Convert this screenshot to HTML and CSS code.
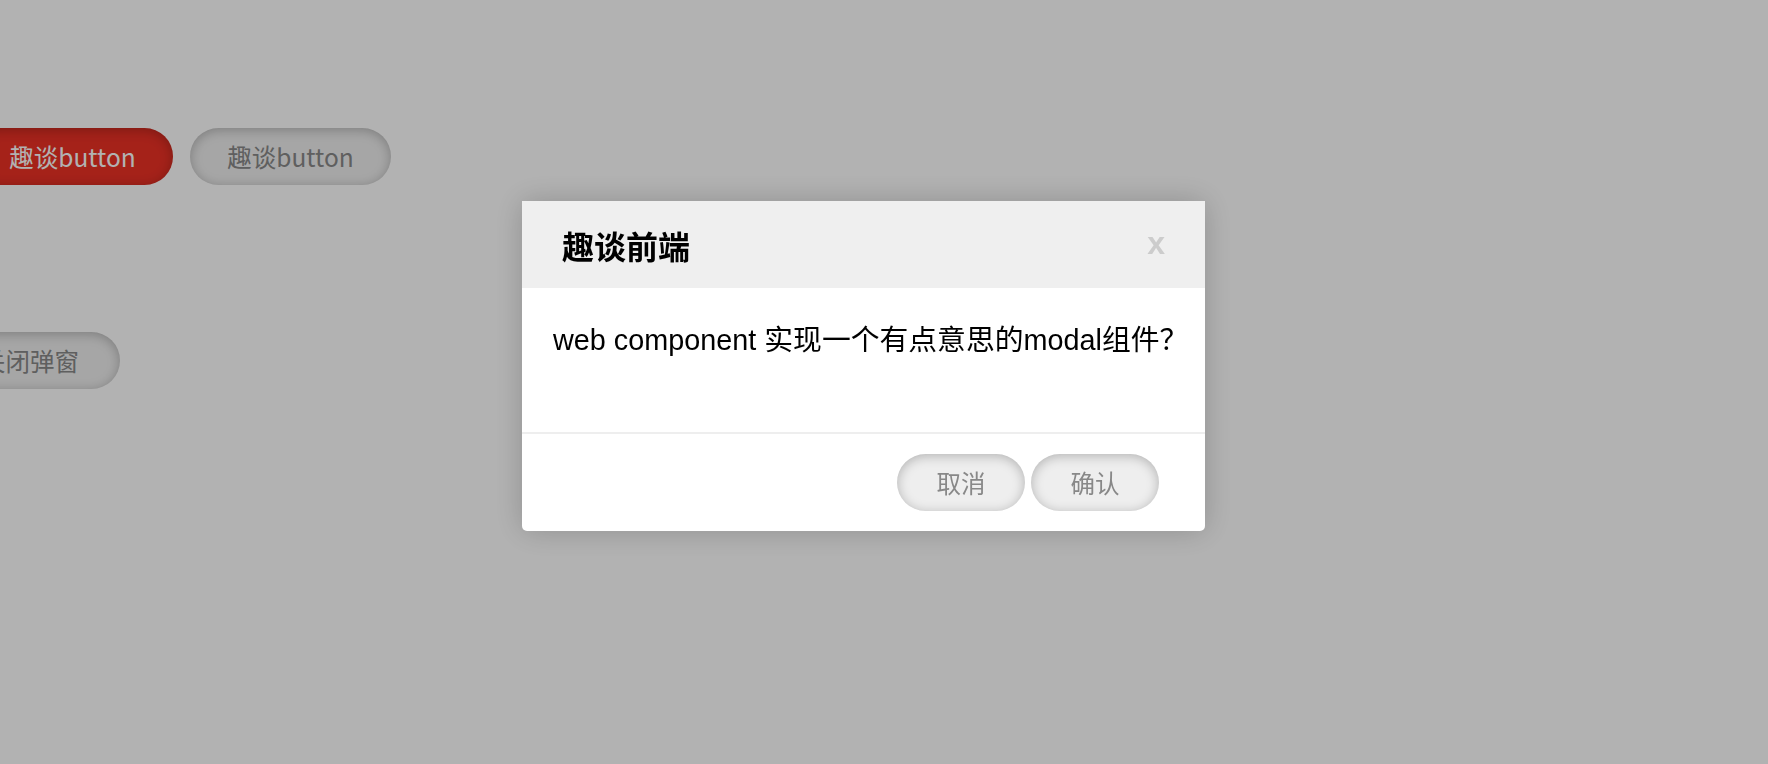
FILE: index.html
```html
<!DOCTYPE html>
<html lang="zh-CN">
<head>
    <meta charset="UTF-8">
    <meta name="viewport" content="width=device-width, initial-scale=1.0">
    <title>趣谈前端 modal</title>
    <link rel="stylesheet" href="styles.css">
</head>
<body>
    <div class="page">
        <div class="btn-row first-row">
            <button class="qt-btn qt-btn-red">趣谈button</button>
            <button class="qt-btn">趣谈button</button>
        </div>
        <div class="btn-row second-row">
            <button class="qt-btn qt-btn-close">关闭弹窗</button>
        </div>
    </div>

    <div class="mask">
        <div class="modal">
            <div class="modal-header">
                <span class="modal-title">趣谈前端</span>
                <span class="modal-close">x</span>
            </div>
            <div class="modal-body">web component 实现一个有点意思的modal组件？</div>
            <div class="modal-footer">
                <button class="qt-btn qt-btn-small">取消</button>
                <button class="qt-btn qt-btn-small">确认</button>
            </div>
        </div>
    </div>
</body>
</html>
```

FILE: styles.css
```css
body {
    margin: 0;
    background-color: #fff;
    font-family: "Liberation Sans", "Noto Sans CJK SC", sans-serif;
    overflow: hidden;
}
.page {
    padding-top: 128px;
}
.btn-row {
    display: flex;
    gap: 17px;
}
.first-row {
    margin-left: -28px;
}
.second-row {
    margin-left: -60px;
    margin-top: 147px;
}
.qt-btn {
    width: 201px;
    height: 57px;
    line-height: 57px;
    padding: 0;
    border: none;
    border-radius: 29px;
    background-color: #eeeeee;
    box-shadow: inset 0 2px 12px rgba(0,0,0,0.25);
    color: #888;
    font-family: "Noto Sans CJK SC", sans-serif;
    font-size: 24.5px;
    text-align: center;
    cursor: pointer;
}
.qt-btn-red {
    background-color: #ec3125;
    color: #fff;
}
.qt-btn-close {
    width: 180px;
}
.qt-btn-small {
    width: 128px;
}
.mask {
    position: fixed;
    top: 0;
    left: 0;
    right: 0;
    bottom: 0;
    background-color: rgba(0,0,0,0.3);
    padding: 201px 0 0 522px;
}
.modal {
    width: 683px;
    background-color: #fff;
    border-radius: 0 0 5px 5px;
    box-shadow: 0 0 30px rgba(0,0,0,0.2);
    overflow: hidden;
}
.modal-header {
    height: 87px;
    display: flex;
    align-items: center;
    justify-content: space-between;
    padding: 0 40px;
    background-color: #efefef;
}
.modal-title {
    font-family: "Noto Sans CJK SC", sans-serif;
    font-size: 32px;
    font-weight: bold;
    color: #000;
}
.modal-close {
    font-size: 32px;
    font-weight: bold;
    color: #cccccc;
    cursor: pointer;
    margin-top: -2px;
}
.modal-body {
    min-height: 84px;
    padding: 30px 20px 30px 31px;
    font-size: 28.8px;
    line-height: 44px;
    color: #000;
    white-space: nowrap;
}
.modal-footer {
    display: flex;
    justify-content: flex-end;
    gap: 6px;
    padding: 20px 46px;
    border-top: 2px solid #eeeeee;
}
```
